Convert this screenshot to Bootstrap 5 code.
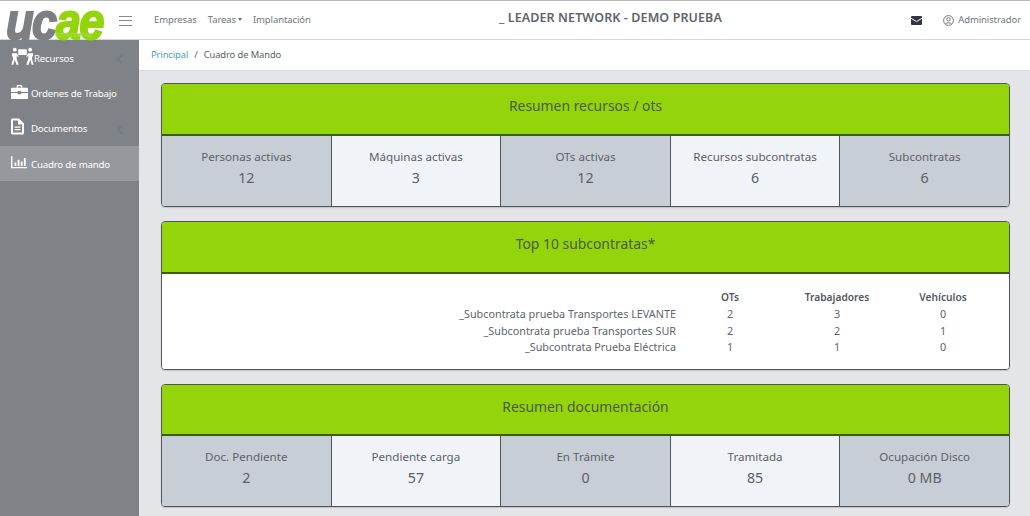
<!DOCTYPE html>
<html lang="es">
<head>
<meta charset="utf-8">
<title>Cuadro de Mando</title>
<link href="https://cdn.jsdelivr.net/npm/bootstrap@5.3.0/dist/css/bootstrap.min.css" rel="stylesheet">
<style>
html,body{height:516px;overflow:hidden}
body{font-family:"Noto Sans","Open Sans",sans-serif;background:#e4e5e8;color:#565b61;font-size:12px;letter-spacing:-.1px}
.top-bar{height:40px;background:#fff;border-top:1px solid #b9b9b9;border-bottom:1px solid #d3d5d8;flex:none}
.logo-box{width:139px;flex:none;padding-left:6px;position:relative;height:38px}
.logo-word{font-family:"Liberation Sans",sans-serif;font-style:italic;font-weight:700;font-size:42px;line-height:42px;letter-spacing:-1.5px;-webkit-text-stroke:1.6px currentColor;white-space:nowrap;display:inline-block;transform-origin:0 0;transform:translateY(-6px) scale(1.08,1.25)}
.logo-uc{color:#7d7f82}.logo-ae{color:#93d50a}
.logo-sub{position:absolute;left:56px;top:31px;font-size:6px;line-height:7px;color:#b5dd6c;letter-spacing:.25px}
.burger{width:13px;height:10px;border-top:1.5px solid #888;border-bottom:1.5px solid #888;position:absolute;left:119px;top:15px}
.burger::after{content:"";display:block;height:1.5px;background:#888;margin-top:2.8px}
.top-link{font-size:9.5px;color:#70757b;text-decoration:none}
.top-title{font-size:12.5px;font-weight:600;color:#5f646a;letter-spacing:.1px;position:absolute;left:499px;top:8px}
.caret-mini{display:inline-block;border-top:3px solid #666;border-left:2.5px solid transparent;border-right:2.5px solid transparent;vertical-align:2px;margin-left:2px}
.side-col{width:139px;background:#7f8287;flex:none}
.side-item{height:35.3px;display:flex;align-items:center;color:#fff;font-size:9.7px;text-decoration:none;position:relative;padding:3px 0 0 11px;letter-spacing:-.2px}
.side-item svg{flex:none;fill:#fff}
.side-item.is-on{background:#95989c}
.side-item.first-one svg{margin-top:-5px}
.chev{position:absolute;left:118px;top:50%;margin-top:-2px;width:7px;height:7px;border-left:2px solid #717a85;border-bottom:2px solid #717a85;transform:rotate(45deg)}
.crumb-bar{height:31px;background:#fff;border-bottom:1px solid #d8dadd;padding-left:12px;font-size:9.4px;flex:none;color:#5a5f65}
.crumb-bar a{color:#4a9fb5;text-decoration:none}
.crumb-sep{margin:0 6px}
.content-zone{padding:12px 20px 0 22px}
.pane{border:1px solid #50555b;border-radius:4px;overflow:hidden;margin-bottom:14px;box-shadow:0 1px 1px rgba(0,0,0,.15)}
.pane-head{height:52px;background:#93d50a;border-bottom:2px solid #3f5a12;display:flex;align-items:center;justify-content:center;font-size:13.9px;color:#4b5a3a;letter-spacing:0;padding-bottom:5px}
.stat-row{display:flex;height:70px}
.stat-cell{flex:1 1 0;text-align:center;border-left:1px solid #50555b;padding-top:11px;font-size:11.6px;line-height:19px;color:#5c6167;letter-spacing:0}
.stat-cell:first-child{border-left:0}
.stat-cell b{display:block;font-weight:400;font-size:14.2px;line-height:22px;margin-top:1px}
.tone-a{background:#c8ced6}.tone-b{background:#f0f3f7}
.sub-body{background:#fff;height:95px;padding-top:15px;display:grid;align-content:start;grid-template-columns:514px 108px 106px 106px;font-size:10.8px;line-height:16.8px;color:#60656b;letter-spacing:0}
.sub-body>div{text-align:center}
.sub-body>div.nm{text-align:right}
.sub-body .hd{font-weight:600;color:#55595f;font-size:10.2px}
.pane-last .pane-head{height:51px}
</style>
</head>
<body>
<div class="d-flex flex-column vh-100">
  <header class="top-bar d-flex align-items-center position-relative">
    <div class="logo-box">
      <span class="logo-word"><span class="logo-uc">uc</span><span class="logo-ae">ae</span></span>
      <span class="logo-sub">CONTRATAS</span>
      <span class="burger"></span>
    </div>
    <nav class="d-flex align-items-center" style="margin-left:15px;gap:11px">
      <a class="top-link" href="#">Empresas</a>
      <a class="top-link" href="#">Tareas<span class="caret-mini"></span></a>
      <a class="top-link" href="#">Implantación</a>
    </nav>
    <div class="top-title">_ LEADER NETWORK - DEMO PRUEBA</div>
    <div class="ms-auto d-flex align-items-center" style="padding-right:9px">
      <svg width="11" height="9" viewBox="0 0 11 9" style="margin-right:21px"><rect width="11" height="9" rx="1" fill="#33373b"/><path d="M0 2.2 5.5 5.6 11 2.2" fill="none" stroke="#fff" stroke-width="1"/></svg>
      <svg width="11" height="11" viewBox="0 0 11 11" style="margin-right:4px"><circle cx="5.5" cy="5.5" r="4.9" fill="none" stroke="#777" stroke-width="1"/><circle cx="5.5" cy="4.4" r="1.7" fill="none" stroke="#777"/><path d="M2.6 9c.6-1.6 5.2-1.6 5.8 0" fill="none" stroke="#777"/></svg>
      <a class="top-link" href="#">Administrador</a>
    </div>
  </header>
  <div class="d-flex flex-grow-1" style="min-height:0">
    <aside class="side-col">
      <a class="side-item first-one" href="#"><svg width="23" height="19" viewBox="0 0 24 19"><circle cx="4" cy="2.4" r="2"/><circle cx="20" cy="2.4" r="2"/><rect x="7.500" y="2" width="9" height="6" rx=".5"/><path d="M1 6h5l2 3v1L6 9v3l2 6H5.600L4 13l-1.600 5H.4L2 12V9L1 10z"/><path d="M23 6h-5l-2 3v1l2-1v3l-2 6h2.400L20 13l1.600 5h2L22 12V9l1 1z"/></svg><span>Recursos</span><i class="chev"></i></a>
      <a class="side-item" href="#"><svg width="17" height="16" viewBox="0 0 18 15" style="margin-right:3px;margin-top:-5px"><path d="M6 3V1.200C6 .5 6.500 0 7.200 0h3.600C11.500 0 12 .5 12 1.200V3h-1.500V1.500h-3V3z"/><path d="M1 3h16c.6 0 1 .4 1 1v3.500H11V6.500H7v1H0V4c0-.6.4-1 1-1z"/><path d="M0 8.500h7V10h4V8.500h7V14c0 .6-.4 1-1 1H1c-.6 0-1-.4-1-1z"/></svg><span>Ordenes de Trabajo</span></a>
      <a class="side-item" href="#"><svg width="13" height="17" viewBox="0 0 13 16" style="margin-right:7px;margin-top:-6px"><path fill-rule="evenodd" d="M1.500 0H8l5 5v9.500c0 .8-.7 1.500-1.500 1.500h-10C.7 16 0 15.300 0 14.500v-13C0 .7.700 0 1.500 0zM2 2v12h9V6H7V2zM3.500 8h6v1.200h-6zm0 2.500h6v1.200h-6z"/></svg><span>Documentos</span><i class="chev"></i></a>
      <a class="side-item is-on" href="#"><svg width="16" height="15" viewBox="0 0 18 14" style="margin-right:4px;margin-top:-5px"><path d="M0 0h1.600v12H18v1.600H0z"/><path d="M4 7h2v4H4zM7.500 4h2v7h-2zM11 6h2v5h-2zM14.500 2h2v9h-2z"/></svg><span>Cuadro de mando</span></a>
    </aside>
    <main class="flex-grow-1 d-flex flex-column" style="min-width:0">
      <div class="crumb-bar d-flex align-items-center"><a href="#">Principal</a><span class="crumb-sep">/</span><span>Cuadro de Mando</span></div>
      <div class="content-zone">
        <section class="pane">
          <div class="pane-head">Resumen recursos / ots</div>
          <div class="stat-row">
            <div class="stat-cell tone-a">Personas activas<b>12</b></div>
            <div class="stat-cell tone-b">Máquinas activas<b>3</b></div>
            <div class="stat-cell tone-a">OTs activas<b>12</b></div>
            <div class="stat-cell tone-b">Recursos subcontratas<b>6</b></div>
            <div class="stat-cell tone-a">Subcontratas<b>6</b></div>
          </div>
        </section>
        <section class="pane">
          <div class="pane-head">Top 10 subcontratas*</div>
          <div class="sub-body">
            <div class="nm"></div><div class="hd">OTs</div><div class="hd">Trabajadores</div><div class="hd">Vehículos</div>
            <div class="nm">_Subcontrata prueba Transportes LEVANTE</div><div>2</div><div>3</div><div>0</div>
            <div class="nm">_Subcontrata prueba Transportes SUR</div><div>2</div><div>2</div><div>1</div>
            <div class="nm">_Subcontrata Prueba Eléctrica</div><div>1</div><div>1</div><div>0</div>
          </div>
        </section>
        <section class="pane pane-last">
          <div class="pane-head">Resumen documentación</div>
          <div class="stat-row">
            <div class="stat-cell tone-a">Doc. Pendiente<b>2</b></div>
            <div class="stat-cell tone-b">Pendiente carga<b>57</b></div>
            <div class="stat-cell tone-a">En Trámite<b>0</b></div>
            <div class="stat-cell tone-b">Tramitada<b>85</b></div>
            <div class="stat-cell tone-a">Ocupación Disco<b>0 MB</b></div>
          </div>
        </section>
      </div>
    </main>
  </div>
</div>
<script src="https://cdn.jsdelivr.net/npm/bootstrap@5.3.0/dist/js/bootstrap.bundle.min.js"></script>
</body>
</html>
